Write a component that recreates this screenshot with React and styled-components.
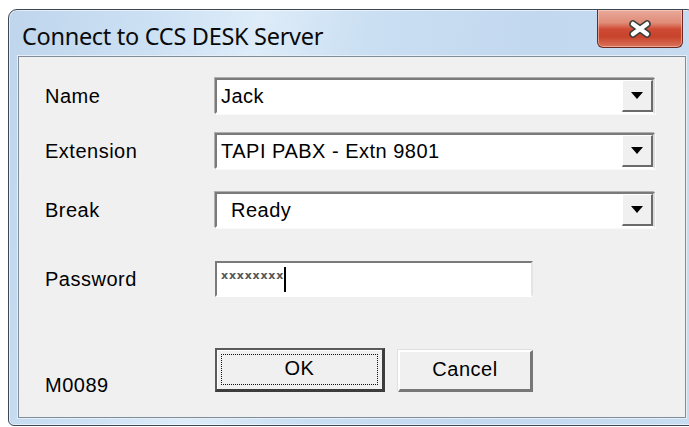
import styled, { createGlobalStyle } from "styled-components";

const GlobalStyle = createGlobalStyle`
    html, body {
        margin: 0;
        padding: 0;
        background: #ffffff;
        overflow: hidden;
    }
    body {
        width: 689px;
        height: 427px;
    }
`;

function CloseGlyph() {
    return (
        <svg width="26" height="18" viewBox="0 0 26 18">
            <path d="M6 4 L20 14 M20 4 L6 14" stroke="#3b3b3b" strokeWidth="7.5" strokeLinecap="round" />
            <path d="M6 4 L20 14 M20 4 L6 14" stroke="#ffffff" strokeWidth="4.5" strokeLinecap="round" />
        </svg>
    );
}

function ArrowDown() {
    return (
        <svg width="12" height="7" viewBox="0 0 12 7">
            <path d="M0 0 H12 L6 7 Z" fill="#000" />
        </svg>
    );
}

function Combo({ value, indent }) {
    return (
        <ComboBox>
            <ComboText $indent={indent}>{value}</ComboText>
            <DropButton>
                <ArrowDown />
            </DropButton>
        </ComboBox>
    );
}

function App() {
    return (
        <>
            <GlobalStyle />
            <Screen>
                <Window>
                    <TitleBar>
                        <Title>Connect to CCS DESK Server</Title>
                        <CloseButton>
                            <CloseGlyph />
                        </CloseButton>
                    </TitleBar>
                    <Client>
                        <Row $top={21}>
                            <Label>Name</Label>
                            <Combo value="Jack" />
                        </Row>
                        <Row $top={19}>
                            <Label>Extension</Label>
                            <Combo value="TAPI PABX - Extn 9801" />
                        </Row>
                        <Row $top={23}>
                            <Label>Break</Label>
                            <Combo value="Ready" indent={10} />
                        </Row>
                        <Row $top={33}>
                            <Label>Password</Label>
                            <PasswordBox>
                                <Masked>xxxxxxxx</Masked>
                                <Caret />
                            </PasswordBox>
                        </Row>
                        <ButtonRow $top={51}>
                            <Label $drop={5}>M0089</Label>
                            <Buttons>
                                <Button $default $width={170}>
                                    <FocusRing>OK</FocusRing>
                                </Button>
                                <Button $width={135}>Cancel</Button>
                            </Buttons>
                        </ButtonRow>
                    </Client>
                </Window>
            </Screen>
        </>
    );
}

const Screen = styled.div`
    padding: 9px 0 0 8px;
    width: 700px;
    height: 427px;
    box-sizing: border-box;
`;

const Window = styled.div`
    width: 688px;
    height: 417px;
    box-sizing: border-box;
    display: flex;
    flex-direction: column;
    border: 1px solid #3e4854;
    border-radius: 9px 9px 6px 6px;
    background: linear-gradient(100deg, #bed5ec 0%, #cde1f4 20%, #deecf9 33%, #cadff2 48%, #c2d8ef 70%, #c8ddf1 100%);
    box-shadow: inset 0 0 0 1px rgba(255, 255, 255, 0.55);
`;

const TitleBar = styled.div`
    height: 46px;
    display: flex;
    align-items: flex-start;
    justify-content: space-between;
    padding-left: 13px;
    padding-right: 12px;
`;

const Title = styled.div`
    font-family: "Noto Sans", "Open Sans", sans-serif;
    font-size: 23.5px;
    line-height: 30px;
    color: #0a0a0a;
    margin-top: 11px;
    letter-spacing: -0.3px;
`;

const CloseButton = styled.div`
    width: 86px;
    height: 38px;
    box-sizing: border-box;
    display: flex;
    align-items: center;
    justify-content: center;
    border: 1px solid #6e2a22;
    border-top: none;
    border-radius: 0 0 6px 6px;
    background: linear-gradient(180deg, #eaaa9b 0%, #df8b77 35%, #cf4a33 52%, #c8432b 72%, #d9735a 100%);
    box-shadow: inset 0 0 0 1px rgba(255, 220, 210, 0.5);
`;

const Client = styled.div`
    margin: 0 9px 7px 9px;
    flex: 1;
    display: flex;
    flex-direction: column;
    background: #f0f0f0;
    border: 1px solid #808d9a;
    box-shadow: 0 0 0 1px #e6eef7;
    padding-left: 26px;
`;

const Row = styled.div`
    display: grid;
    grid-template-columns: 170px auto;
    align-items: center;
    margin-top: ${(p) => p.$top}px;
`;

const ButtonRow = styled(Row)`
    align-items: end;
`;

const Label = styled.div`
    font-family: "Liberation Sans", Arial, sans-serif;
    font-size: 20px;
    letter-spacing: 0.5px;
    color: #000;
    margin-bottom: -${(p) => p.$drop || 0}px;
`;

const ComboBox = styled.div`
    width: 440px;
    height: 36px;
    box-sizing: border-box;
    display: flex;
    align-items: stretch;
    background: #fff;
    border-top: 2px solid #7a7a7a;
    border-left: 2px solid #7a7a7a;
    border-right: 2px solid #dcdcdc;
    border-bottom: 2px solid #ffffff;
    box-shadow: -1px -1px 0 #b0b0b0, 1px 1px 0 #fafafa;
`;

const ComboText = styled.div`
    flex: 1;
    display: flex;
    align-items: center;
    padding-left: ${(p) => 4 + (p.$indent || 0)}px;
    font-family: "Liberation Sans", Arial, sans-serif;
    font-size: 20px;
    letter-spacing: 0.5px;
    color: #000;
`;

const DropButton = styled.div`
    width: 31px;
    box-sizing: border-box;
    display: flex;
    align-items: center;
    justify-content: center;
    background: #f0f0f0;
    border-top: 1px solid #ffffff;
    border-left: 1px solid #ffffff;
    border-right: 2px solid #6a6a6a;
    border-bottom: 2px solid #6a6a6a;
`;

const PasswordBox = styled.div`
    width: 318px;
    height: 36px;
    box-sizing: border-box;
    display: flex;
    align-items: center;
    background: #fff;
    border-top: 2px solid #7a7a7a;
    border-left: 2px solid #7a7a7a;
    border-right: 2px solid #e4e4e4;
    border-bottom: 2px solid #ffffff;
    padding-left: 4px;
`;

const Masked = styled.span`
    font-family: "DejaVu Sans", sans-serif;
    font-size: 11px;
    font-weight: bold;
    letter-spacing: 0.8px;
    color: #555;
    margin-top: -8px;
`;

const Caret = styled.span`
    width: 2px;
    height: 25px;
    background: #000;
    margin-left: 0;
`;

const Buttons = styled.div`
    display: flex;
    align-items: flex-end;
    gap: 13px;
`;

const Button = styled.div`
    width: ${(p) => p.$width}px;
    height: ${(p) => (p.$default ? 44 : 42)}px;
    box-sizing: border-box;
    display: flex;
    align-items: center;
    justify-content: center;
    padding: ${(p) => (p.$default ? "4px" : "0 0 2px")};
    background: #f0f0f0;
    border-top: 2px solid ${(p) => (p.$default ? "#5a5a5a" : "#ffffff")};
    border-left: 2px solid ${(p) => (p.$default ? "#5a5a5a" : "#ffffff")};
    border-right: 3px solid ${(p) => (p.$default ? "#3c3c3c" : "#777")};
    border-bottom: 3px solid ${(p) => (p.$default ? "#3c3c3c" : "#777")};
    box-shadow: ${(p) => (p.$default ? "inset 1px 1px 0 #fff" : "-1px -1px 0 #e0e0e0")};
    font-family: "Liberation Sans", Arial, sans-serif;
    font-size: 20px;
    letter-spacing: 0.5px;
    color: #000;
`;

const FocusRing = styled.div`
    width: 100%;
    height: 100%;
    box-sizing: border-box;
    display: flex;
    align-items: center;
    justify-content: center;
    border: 1px dotted #111;
    padding-bottom: 3px;
`;

export default App;
